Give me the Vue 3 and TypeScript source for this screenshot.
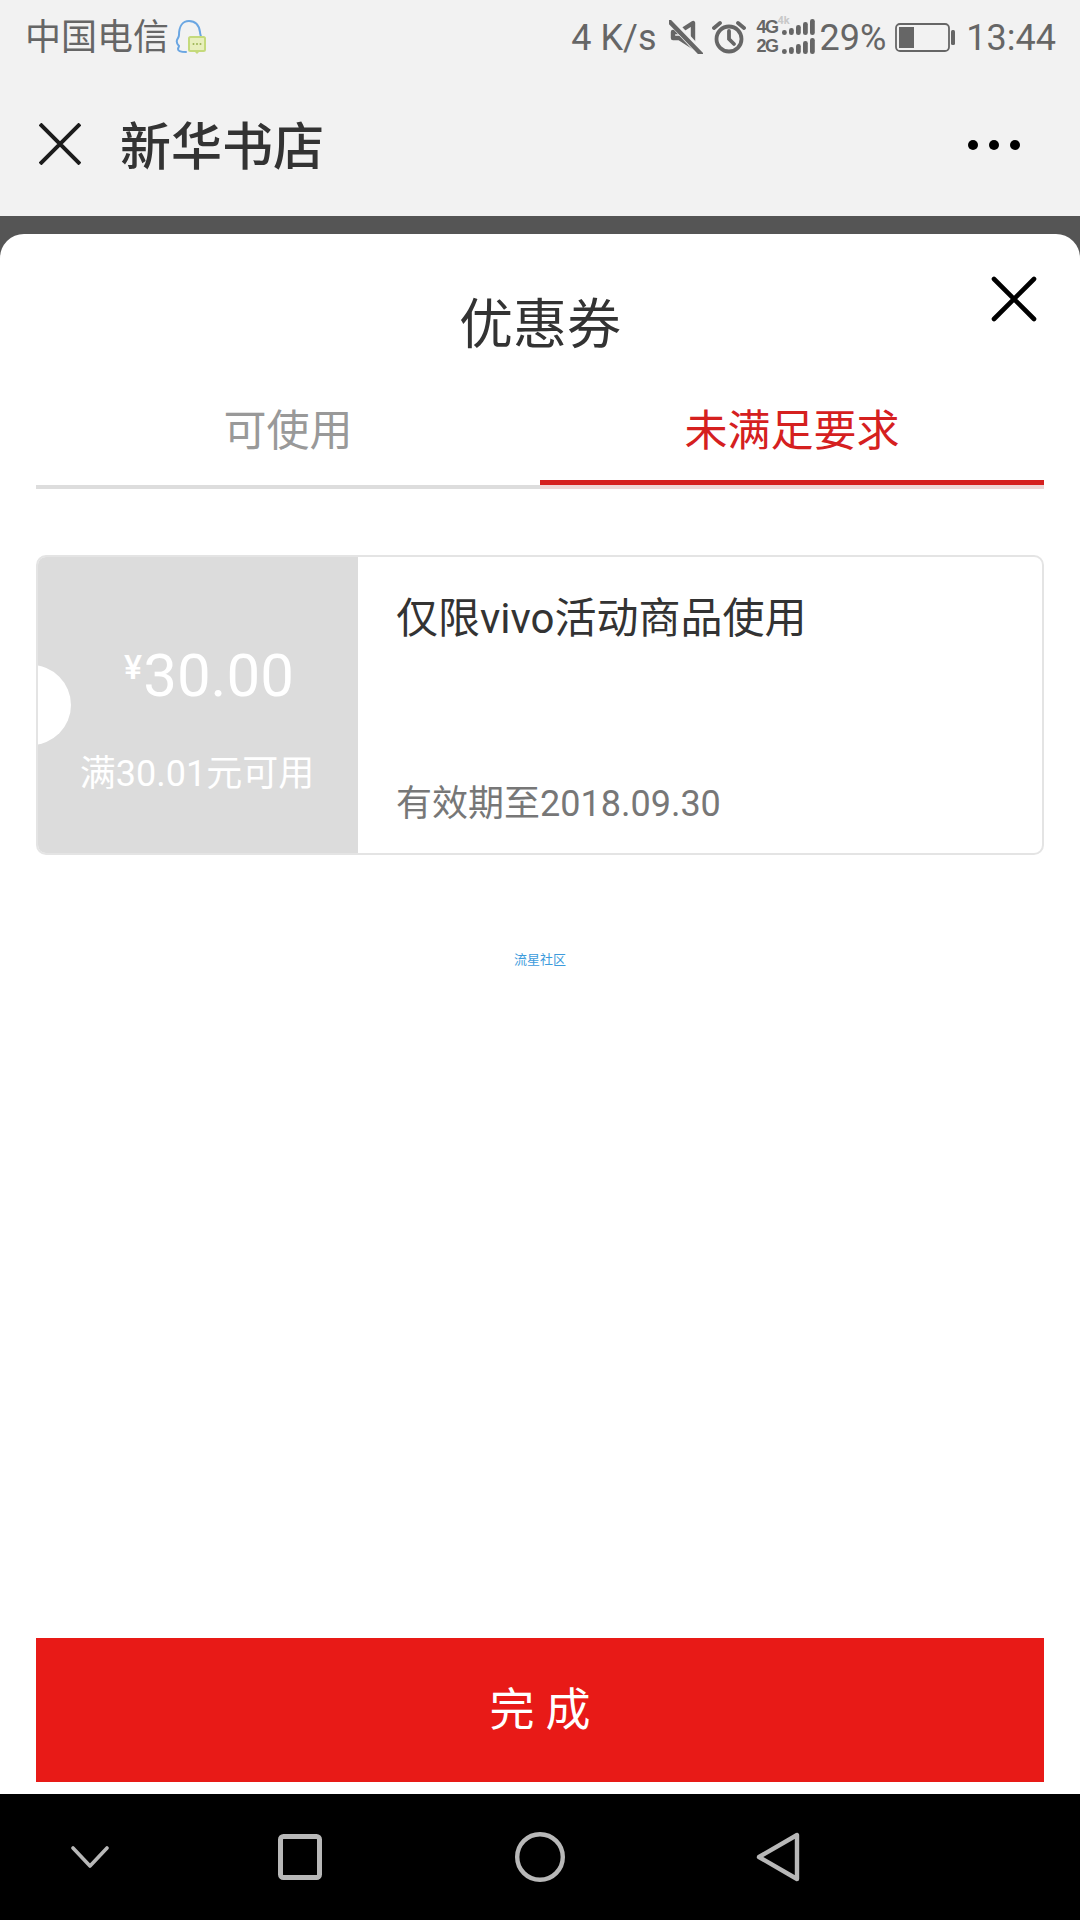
<script setup lang="ts">
const tabs = [
  { label: '可使用', active: false },
  { label: '未满足要求', active: true },
]
const signalBars = [
  { x: 0, h: 5 }, { x: 7, h: 7 }, { x: 14, h: 10 }, { x: 21, h: 13 }, { x: 28, h: 16 },
]
</script>

<template>
  <div class="page">
    <header class="status">
      <div class="status-left">
        <span class="carrier">中国电信</span>
        <svg class="qq" width="32" height="36" viewBox="0 0 32 36">
          <path d="M11 33C6 33 3 32 3 30c0-1 1-2 1-3-1-1-3-3-2-6 1-2 2-3 2-5C4 7 8 2 14 2s10 4 11 11c0 2 1 4 1 5" fill="none" stroke="#6aa6e2" stroke-width="2" stroke-linecap="round" />
          <rect x="14" y="18" width="16" height="14" rx="1.5" fill="#e8efbd" stroke="#c5da7c" stroke-width="2" />
          <path d="M19 32h6l-3 3z" fill="#c5da7c" />
          <circle cx="18.5" cy="25" r="1" fill="#9cb455" />
          <circle cx="22" cy="25" r="1" fill="#9cb455" />
          <circle cx="25.5" cy="25" r="1" fill="#9cb455" />
        </svg>
      </div>
      <div class="status-right">
        <span class="speed">4 K/s</span>
        <svg class="mute" width="34" height="34" viewBox="0 0 34 34" fill="none" stroke="#666" stroke-width="4.4">
          <path d="M4 12h6l14-9v24l-14-9H4z" stroke-linejoin="round" />
          <path d="M3 2l29 31" stroke="#f2f2f2" stroke-width="8" />
          <path d="M1 2l31 32" stroke-linecap="round" />
        </svg>
        <svg class="alarm" width="34" height="34" viewBox="0 0 34 34" fill="none" stroke="#666" stroke-width="3.8" stroke-linecap="round">
          <circle cx="17" cy="19" r="12.5" />
          <path d="M17 11v8l5 5" />
          <path d="M2 8l6-5M32 8l-6-5" />
        </svg>
        <div class="network">
          <div class="net-row">
            <span class="net-label">4G</span>
            <span class="net-speed">4k</span>
            <svg width="34" height="16" viewBox="0 0 34 16" fill="#666">
              <rect v-for="b in signalBars" :key="b.x" :x="b.x" :y="16 - b.h" width="4.8" :height="b.h" rx="2.3" />
            </svg>
          </div>
          <div class="net-row">
            <span class="net-label">2G</span>
            <svg width="34" height="16" viewBox="0 0 34 16" fill="#666">
              <rect v-for="b in signalBars" :key="b.x" :x="b.x" :y="16 - b.h" width="4.8" :height="b.h" rx="2.3" />
            </svg>
          </div>
        </div>
        <span class="percent">29%</span>
        <svg class="battery" width="60" height="30" viewBox="0 0 60 30">
          <rect x="1" y="1" width="53" height="27" rx="4" fill="none" stroke="#666" stroke-width="1.8" />
          <rect x="4" y="4" width="15" height="21" fill="#666" />
          <rect x="56" y="7" width="4" height="15" rx="1.5" fill="#666" />
        </svg>
        <span class="clock">13:44</span>
      </div>
    </header>

    <nav class="navbar">
      <svg class="nav-close" width="42" height="42" viewBox="0 0 42 42" stroke="#1c1c1c" stroke-width="4" fill="none">
        <path d="M1 1l40 40M41 1L1 41" />
      </svg>
      <h1 class="nav-title">新华书店</h1>
      <div class="dots">
        <i></i><i></i><i></i>
      </div>
    </nav>

    <div class="overlay">
      <section class="sheet">
        <svg class="sheet-close" width="46" height="46" viewBox="0 0 46 46" stroke="#000" stroke-width="4.6" stroke-linecap="round" fill="none">
          <path d="M3 3l40 40M43 3L3 43" />
        </svg>
        <h2 class="sheet-title">优惠券</h2>
        <div class="tabs">
          <div v-for="tab in tabs" :key="tab.label" class="tab" :class="{ active: tab.active }">
            {{ tab.label }}
          </div>
        </div>

        <article class="coupon">
          <div class="coupon-left">
            <span class="notch"></span>
            <div class="amount"><small>¥</small>30.00</div>
            <div class="condition">满30.01元可用</div>
          </div>
          <div class="coupon-right">
            <div class="coupon-name">仅限vivo活动商品使用</div>
            <div class="coupon-date">有效期至2018.09.30</div>
          </div>
        </article>

        <div class="watermark">流星社区</div>
        <button class="done">完 成</button>
      </section>
    </div>

    <footer class="softkeys">
      <svg width="38" height="22" viewBox="0 0 38 22" fill="none" stroke="#b8b8b8" stroke-width="3.6" stroke-linecap="round" stroke-linejoin="round">
        <path d="M2 2l17 18L36 2" />
      </svg>
      <svg width="44" height="46" viewBox="0 0 44 46" fill="none" stroke="#b8b8b8" stroke-width="5">
        <rect x="2.5" y="2.5" width="39" height="41" rx="3" />
      </svg>
      <svg width="50" height="50" viewBox="0 0 50 50" fill="none" stroke="#b8b8b8" stroke-width="4.4">
        <circle cx="25" cy="25" r="22.8" />
      </svg>
      <svg width="44" height="50" viewBox="0 0 44 50" fill="none" stroke="#b8b8b8" stroke-width="4.4" stroke-linejoin="round">
        <path d="M41 3v44L3 25z" />
      </svg>
    </footer>
  </div>
</template>

<style>
html, body { margin: 0; padding: 0; background: #fff; }
</style>

<style scoped>
.page {
  width: 1080px;
  height: 1920px;
  display: flex;
  flex-direction: column;
  overflow: hidden;
  font-family: Roboto, "Noto Sans CJK SC", sans-serif;
  background: #f2f2f2;
}
.status {
  height: 72px;
  flex: none;
  display: flex;
  justify-content: space-between;
  align-items: center;
  padding: 3px 24px 0 25px;
  box-sizing: border-box;
  color: #666;
}
.status-left, .status-right { display: flex; align-items: center; }
.carrier { font-size: 36px; line-height: 40px; }
.qq { margin-left: 6px; margin-top: -2px; }
.speed { font-size: 36px; line-height: 40px; }
.mute { margin-left: 12px; margin-top: -2px; }
.alarm { margin-left: 9px; margin-top: -2px; }
.network {
  margin-left: 11px;
  width: 59px;
  display: flex;
  flex-direction: column;
  gap: 3px;
  margin-top: -2px;
  position: relative;
}
.net-row { display: flex; align-items: flex-end; justify-content: space-between; height: 16px; }
.net-label {
  font-size: 18px;
  line-height: 16px;
  font-weight: 700;
  font-family: "Liberation Sans", sans-serif;
  letter-spacing: -1.5px;
}
.net-speed {
  position: absolute;
  left: 21px;
  top: -4px;
  font-size: 11px;
  line-height: 12px;
  font-weight: 700;
  color: #c8c8c8;
}
.percent { font-size: 36px; line-height: 40px; margin-left: 4px; }
.battery { margin-left: 9px; }
.clock { font-size: 36px; line-height: 40px; margin-left: 11px; }

.navbar {
  height: 144px;
  flex: none;
  display: flex;
  align-items: center;
  padding: 4px 0 0 39px;
  box-sizing: border-box;
  position: relative;
}
.nav-close { flex: none; margin-top: -4px; }
.nav-title {
  margin: 4px 0 0 39px;
  font-size: 51px;
  line-height: 60px;
  font-weight: 500;
  color: #333;
}
.dots {
  margin-left: auto;
  margin-right: 60px;
  display: flex;
  gap: 11px;
  margin-top: -3px;
}
.dots i { width: 10px; height: 10px; border-radius: 50%; background: #000; display: block; }

.overlay {
  flex: 1;
  min-height: 0;
  background: #555;
  padding-top: 18px;
  display: flex;
}
.sheet {
  flex: 1;
  position: relative;
  background: #fff;
  border-radius: 24px 24px 0 0;
  padding: 0 36px 12px;
  display: flex;
  flex-direction: column;
}
.sheet-close { position: absolute; top: 42px; right: 43px; }
.sheet-title {
  margin: 60px 0 0;
  text-align: center;
  font-size: 54px;
  line-height: 64px;
  font-weight: 400;
  color: #333;
}
.tabs { display: flex; margin-top: 21px; }
.tab {
  flex: 1;
  height: 110px;
  box-sizing: border-box;
  text-align: center;
  font-size: 43px;
  line-height: 104px;
  color: #999;
  border-bottom: 4px solid #ddd;
}
.tab.active {
  color: #d5201f;
  border-bottom-color: #eed6d6;
  box-shadow: inset 0 -5px 0 #d5201f;
}
.coupon {
  margin-top: 66px;
  height: 300px;
  flex: none;
  display: flex;
  border-radius: 10px;
  overflow: hidden;
  border: 2px solid #e4e4e4;
  box-sizing: border-box;
}
.coupon-left {
  width: 322px;
  margin: -2px 0 -2px -2px;
  flex: none;
  background: #dcdcdc;
  color: #fff;
  position: relative;
  text-align: center;
}
.notch {
  position: absolute;
  left: -45px;
  top: 110px;
  width: 80px;
  height: 80px;
  border-radius: 50%;
  background: #fff;
}
.amount {
  margin-top: 77px;
  padding-left: 24px;
  font-size: 60px;
  line-height: 70px;
  white-space: nowrap;
}
.amount small { font-size: 34px; font-weight: 500; vertical-align: 17px; margin-right: 1px; }
.condition {
  margin-top: 41px;
  font-size: 36px;
  line-height: 44px;
  white-space: nowrap;
}
.coupon-right {
  flex: 1;
  padding: 40px 0 27px 38px;
  display: flex;
  flex-direction: column;
  justify-content: space-between;
}
.coupon-name { font-size: 42px; line-height: 44px; color: #333; }
.coupon-date { font-size: 36px; line-height: 44px; color: #777; }
.watermark {
  margin-top: 92px;
  text-align: center;
  font-size: 13px;
  line-height: 25px;
  color: #3d9bdc;
}
.done {
  margin-top: auto;
  height: 144px;
  flex: none;
  border: 0;
  border-radius: 0;
  background: #e81a17;
  color: #fff;
  font-family: inherit;
  font-size: 45px;
  padding: 0 0 7px;
}
.softkeys {
  height: 126px;
  flex: none;
  background: #000;
  display: grid;
  grid-template-columns: 71px 38px 169px 44px 193px 50px 191px 44px;
  align-items: center;
}
.softkeys svg:nth-child(1) { grid-column: 2; }
.softkeys svg:nth-child(2) { grid-column: 4; }
.softkeys svg:nth-child(3) { grid-column: 6; }
.softkeys svg:nth-child(4) { grid-column: 8; }
</style>
